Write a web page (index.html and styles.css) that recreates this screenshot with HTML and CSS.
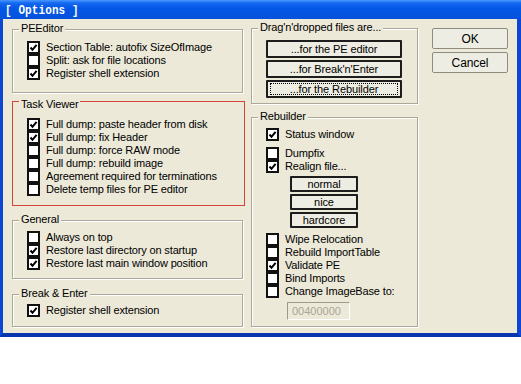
FILE: index.html
```html
<!DOCTYPE html>
<html lang="en">
<head>
  <meta charset="UTF-8">
  <title>Options</title>
  <link rel="stylesheet" href="styles.css">
</head>
<body>
  <div class="window">
    <div class="titlebar"><span class="title">[ Options ]</span></div>
    <div class="client">
      <div class="col col-left">
        <div class="group group-pe">
          <div class="group-title">PEEditor</div>
          <ul class="checks">
            <li><span class="box"><svg viewBox="0 0 9 9"><path d="M1.5 4.5 L3.5 6.8 L7.6 1.8"/></svg></span>Section Table: autofix SizeOfImage</li>
            <li><span class="box"></span>Split: ask for file locations</li>
            <li><span class="box"><svg viewBox="0 0 9 9"><path d="M1.5 4.5 L3.5 6.8 L7.6 1.8"/></svg></span>Register shell extension</li>
          </ul>
        </div>

        <div class="group group-task">
          <div class="group-title">Task Viewer</div>
          <ul class="checks">
            <li><span class="box"><svg viewBox="0 0 9 9"><path d="M1.5 4.5 L3.5 6.8 L7.6 1.8"/></svg></span>Full dump: paste header from disk</li>
            <li><span class="box"><svg viewBox="0 0 9 9"><path d="M1.5 4.5 L3.5 6.8 L7.6 1.8"/></svg></span>Full dump: fix Header</li>
            <li><span class="box"></span>Full dump: force RAW mode</li>
            <li><span class="box"></span>Full dump: rebuild image</li>
            <li><span class="box"></span>Agreement required for terminations</li>
            <li><span class="box"></span>Delete temp files for PE editor</li>
          </ul>
        </div>

        <div class="group group-general">
          <div class="group-title">General</div>
          <ul class="checks">
            <li><span class="box"></span>Always on top</li>
            <li><span class="box"><svg viewBox="0 0 9 9"><path d="M1.5 4.5 L3.5 6.8 L7.6 1.8"/></svg></span>Restore last directory on startup</li>
            <li><span class="box"><svg viewBox="0 0 9 9"><path d="M1.5 4.5 L3.5 6.8 L7.6 1.8"/></svg></span>Restore last main window position</li>
          </ul>
        </div>

        <div class="group group-break">
          <div class="group-title">Break &amp; Enter</div>
          <ul class="checks">
            <li><span class="box"><svg viewBox="0 0 9 9"><path d="M1.5 4.5 L3.5 6.8 L7.6 1.8"/></svg></span>Register shell extension</li>
          </ul>
        </div>
      </div>

      <div class="col col-mid">
        <div class="group group-drag">
          <div class="group-title">Drag'n'dropped files are...</div>
          <div class="drag-buttons">
            <button class="btn btn-dark">...for the PE editor</button>
            <button class="btn btn-dark">...for Break'n'Enter</button>
            <button class="btn btn-dark focused"><span>...for the Rebuilder</span></button>
          </div>
        </div>

        <div class="group group-rebuild">
          <div class="group-title">Rebuilder</div>
          <ul class="checks">
            <li><span class="box"><svg viewBox="0 0 9 9"><path d="M1.5 4.5 L3.5 6.8 L7.6 1.8"/></svg></span>Status window</li>
          </ul>
          <ul class="checks checks-realign">
            <li><span class="box"></span>Dumpfix</li>
            <li><span class="box"><svg viewBox="0 0 9 9"><path d="M1.5 4.5 L3.5 6.8 L7.6 1.8"/></svg></span>Realign file...</li>
          </ul>
          <div class="realign-buttons">
            <button class="btn btn-dark btn-small">normal</button>
            <button class="btn btn-dark btn-small">nice</button>
            <button class="btn btn-dark btn-small">hardcore</button>
          </div>
          <ul class="checks checks-options">
            <li><span class="box"></span>Wipe Relocation</li>
            <li><span class="box"></span>Rebuild ImportTable</li>
            <li><span class="box"><svg viewBox="0 0 9 9"><path d="M1.5 4.5 L3.5 6.8 L7.6 1.8"/></svg></span>Validate PE</li>
            <li><span class="box"></span>Bind Imports</li>
            <li><span class="box"></span>Change ImageBase to:</li>
          </ul>
          <input class="imagebase" type="text" value="00400000" disabled>
        </div>
      </div>

      <div class="col col-right">
        <button class="btn btn-dialog">OK</button>
        <button class="btn btn-dialog">Cancel</button>
      </div>
    </div>
  </div>
</body>
</html>
```

FILE: styles.css
```css
body {
  margin: 0;
  padding: 0;
  background-color: #ffffff;
  font-family: 'Liberation Sans', Arial, sans-serif;
  font-size: 11px;
  letter-spacing: -0.15px;
  color: #000;
}

.window {
  width: 521px;
  box-sizing: border-box;
  border-left: 3px solid #0b47d0;
  border-right: 4px solid #0b47d0;
  border-bottom: 4px solid #0834b0;
}

.titlebar {
  height: 19px;
  margin-left: -3px;
  margin-right: -4px;
  background: linear-gradient(#4a98ff 0, #1668f0 3px, #0458e6 8px, #0551dc 100%);
  display: flex;
  align-items: center;
}

.title {
  display: inline-block;
  margin-left: 5px;
  color: #fff;
  font-family: 'Liberation Mono', 'Courier New', monospace;
  font-weight: bold;
  font-size: 11px;
  letter-spacing: 0.1px;
  transform: scaleY(1.2);
}

.client {
  display: flex;
  height: 314px;
  padding-left: 9px;
  background-color: #ece9d8;
}

.col {
  display: flex;
  flex-direction: column;
}

.col-left {
  width: 233px;
}

.col-mid {
  width: 167px;
  margin-left: 6px;
}

.col-right {
  width: 76px;
  margin-left: 14px;
}

/* group boxes */
.group {
  box-sizing: border-box;
  border: 1px solid #aca899;
  box-shadow: inset 1px 1px 0 #fff, 1px 1px 0 #fff;
  padding-left: 14px;
}

.group-title {
  display: table;
  margin: -8px 0 0 -8px;
  padding: 0 2px;
  line-height: 13px;
  background-color: #ece9d8;
}

.group-pe { width: 231px; height: 64px; margin-top: 10px; }
.group-task { width: 233px; height: 105px; margin-top: 8px; border-color: #d8403a; box-shadow: none; }
.group-task .group-title { margin-top: -4px; }
.group-general { width: 231px; height: 59px; margin-top: 14px; }
.group-break { width: 231px; height: 33px; margin-top: 15px; }

.group-drag { height: 76px; margin-top: 9px; }
.group-rebuild { height: 210px; margin-top: 13px; }

/* checkbox lists */
.checks {
  list-style: none;
  margin: 0;
  padding: 0;
}

.checks li {
  display: flex;
  align-items: center;
  height: 13px;
  line-height: 13px;
  white-space: nowrap;
}

.box {
  box-sizing: border-box;
  width: 13px;
  height: 13px;
  margin-right: 6px;
  border: 2px solid #111;
  background-color: #fff;
  display: flex;
  flex-shrink: 0;
}

.box svg {
  width: 9px;
  height: 9px;
}

.box path {
  fill: none;
  stroke: #000;
  stroke-width: 2;
}

.group-pe .checks { margin-top: 6px; }
.group-task .checks { margin-top: 7px; }
.group-general .checks { margin-top: 5px; }
.group-break .checks { margin-top: 4px; }
.group-rebuild .checks { margin-top: 5px; }
.group-rebuild .checks-realign { margin-top: 6px; }
.group-rebuild .checks-options { margin-top: 5px; }

/* buttons */
.btn {
  box-sizing: border-box;
  font-family: inherit;
  font-size: 11px;
  letter-spacing: -0.1px;
  color: #000;
  background-color: #eeede3;
  padding: 0;
  margin: 0;
  cursor: pointer;
}

.btn-dark {
  border: 2px solid #1d1d1d;
  border-radius: 1px;
}

.drag-buttons {
  display: flex;
  flex-direction: column;
  gap: 2px;
  margin-top: 6px;
}

.drag-buttons .btn {
  width: 136px;
  height: 18px;
}

.focused span {
  display: block;
  margin: 0 2px;
  border: 1px dotted #000;
  line-height: 10px;
}

.realign-buttons {
  display: flex;
  flex-direction: column;
  gap: 2px;
  margin: 3px 0 0 24px;
}

.btn-small {
  width: 68px;
  height: 16px;
  line-height: 11px;
}

.imagebase {
  box-sizing: border-box;
  width: 63px;
  height: 18px;
  margin: 4px 0 0 21px;
  padding: 0 0 0 4px;
  font-family: inherit;
  font-size: 11px;
  color: #a8a698;
  background-color: #ece9d8;
  border: 1px solid #9c9a8c;
  border-right-color: #fff;
  border-bottom-color: #fff;
}

.btn-dialog {
  width: 76px;
  height: 21px;
  margin-top: 9px;
  border: 1px solid #8e8c80;
  border-radius: 2px;
  font-size: 12px;
}

.btn-dialog + .btn-dialog {
  margin-top: 3px;
}
```
